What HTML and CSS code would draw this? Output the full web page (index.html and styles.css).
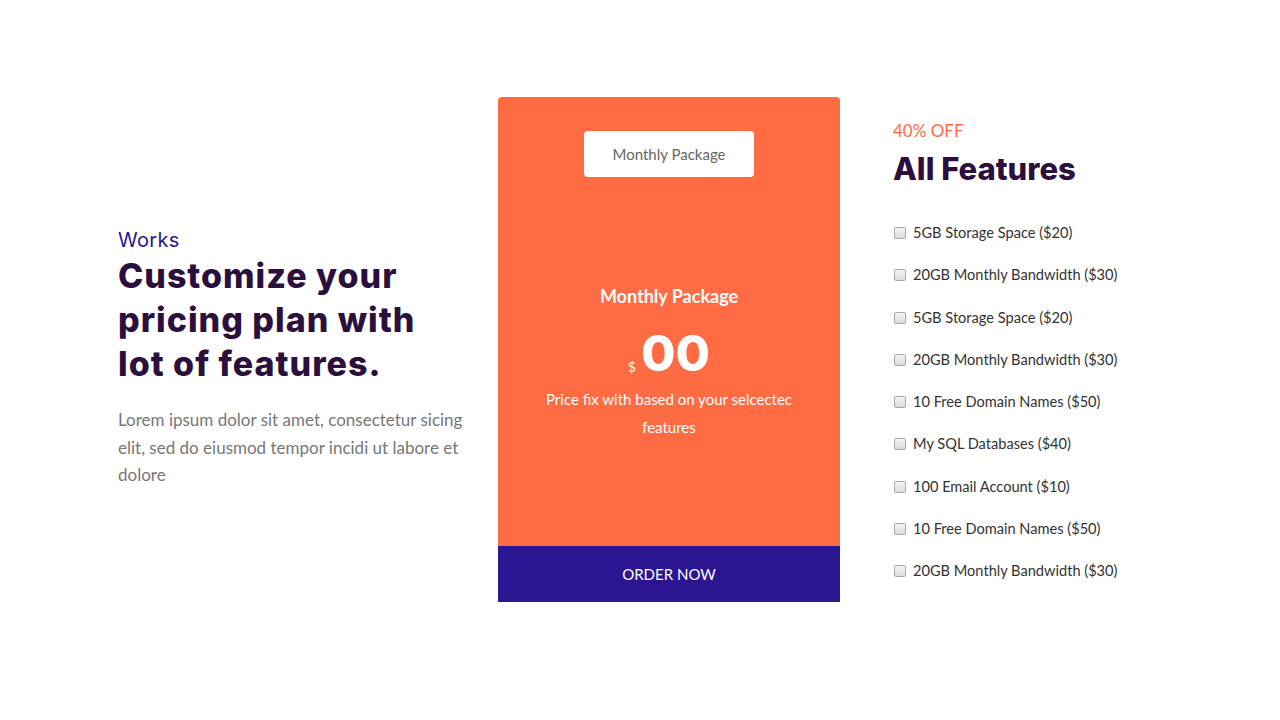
FILE: index.html
```html
<!DOCTYPE html>
<html lang="en">
<head>
<meta charset="utf-8">
<title>Pricing</title>
<link rel="stylesheet" href="styles.css">
</head>
<body>
<section class="pricing">
  <div class="intro">
    <div class="eyebrow">Works</div>
    <h1 class="title">Customize your<br>pricing plan with<br>lot of features.</h1>
    <p class="lead">Lorem ipsum dolor sit amet, consectetur sicing<br>elit, sed do eiusmod tempor incidi ut labore et<br>dolore</p>
  </div>
  <div class="card">
    <div class="card-body">
      <div class="tag">Monthly Package</div>
      <div class="plan">
        <div class="plan-name">Monthly Package</div>
        <div class="price"><span class="currency">$</span><span class="amount">00</span></div>
        <p class="plan-note">Price fix with based on your selcectec<br>features</p>
      </div>
    </div>
    <a class="order" href="#">ORDER NOW</a>
  </div>
  <div class="features">
    <div class="off">40% OFF</div>
    <h2 class="features-title">All Features</h2>
    <ul class="feature-list">
      <li><label><input type="checkbox" class="check"> 5GB Storage Space ($20)</label></li>
      <li><label><input type="checkbox" class="check"> 20GB Monthly Bandwidth ($30)</label></li>
      <li><label><input type="checkbox" class="check"> 5GB Storage Space ($20)</label></li>
      <li><label><input type="checkbox" class="check"> 20GB Monthly Bandwidth ($30)</label></li>
      <li><label><input type="checkbox" class="check"> 10 Free Domain Names ($50)</label></li>
      <li><label><input type="checkbox" class="check"> My SQL Databases ($40)</label></li>
      <li><label><input type="checkbox" class="check"> 100 Email Account ($10)</label></li>
      <li><label><input type="checkbox" class="check"> 10 Free Domain Names ($50)</label></li>
      <li><label><input type="checkbox" class="check"> 20GB Monthly Bandwidth ($30)</label></li>
    </ul>
  </div>
</section>
</body>
</html>
```

FILE: styles.css
```css
* { box-sizing: border-box; }
html, body { margin: 0; padding: 0; background: #fff; }
body {
  font-family: Lato, "Open Sans", sans-serif;
  color: #333;
  width: 1280px;
  height: 720px;
  overflow: hidden;
}
.pricing {
  display: flex;
  align-items: center;
  padding: 97px 0 0 118px;
}
.intro {
  width: 380px;
  padding-right: 20px;
  margin-top: 18px;
}
.eyebrow {
  font-family: Inter, "DejaVu Sans", sans-serif;
  font-size: 20px;
  color: #2a1592;
  line-height: 24px;
  letter-spacing: 0.3px;
}
.title {
  font-family: Inter, "DejaVu Sans", sans-serif;
  font-weight: 800;
  font-size: 34px;
  line-height: 44px;
  color: #2b0f3d;
  margin: 2px 0 20px;
  letter-spacing: 1px;
}
.lead {
  font-size: 17px;
  line-height: 27.5px;
  color: #777;
  margin: 0;
}
.card {
  width: 342px;
  height: 505px;
  background: #ff6b42;
  border-radius: 4px 4px 0 0;
  display: flex;
  flex-direction: column;
}
.card-body {
  flex: 1;
  display: flex;
  flex-direction: column;
  align-items: center;
  padding-top: 34px;
}
.tag {
  width: 170px;
  height: 46px;
  background: #fff;
  border-radius: 4px;
  color: #666;
  font-size: 15px;
  display: flex;
  align-items: center;
  justify-content: center;
}
.plan {
  margin-top: 106px;
  text-align: center;
  color: #fff;
}
.plan-name {
  font-weight: 700;
  font-size: 18px;
  line-height: 26px;
}
.price {
  display: flex;
  align-items: flex-end;
  justify-content: center;
  margin-top: 17px;
  height: 54px;
}
.currency {
  font-size: 14px;
  line-height: 14px;
  margin-right: 5px;
  padding-bottom: 6px;
}
.amount {
  font-family: Inter, "DejaVu Sans", sans-serif;
  font-weight: 800;
  font-size: 50px;
  line-height: 54px;
}
.plan-note {
  margin: 5px 0 0;
  font-size: 15px;
  line-height: 28px;
}
.order {
  height: 56px;
  background: #2b1591;
  color: #fff;
  text-decoration: none;
  font-size: 15px;
  display: flex;
  align-items: center;
  justify-content: center;
}
.features {
  align-self: flex-start;
  margin-left: 53px;
  padding-top: 23px;
}
.off {
  color: #ff6b42;
  font-size: 17px;
  line-height: 22px;
}
.features-title {
  font-family: Inter, "DejaVu Sans", sans-serif;
  font-weight: 800;
  font-size: 31px;
  line-height: 38px;
  color: #2b0f3d;
  margin: 8px 0 0;
}
.feature-list {
  list-style: none;
  margin: 34px 0 0;
  padding: 0;
}
.feature-list li {
  height: 42.25px;
  font-size: 14.6px;
  color: #333;
  line-height: 22px;
}
.feature-list label {
  display: flex;
  align-items: center;
}
.check {
  appearance: none;
  -webkit-appearance: none;
  width: 12px;
  height: 12px;
  margin: 0 7px 0 1px;
  border: 1px solid #a8a8a8;
  border-radius: 2px;
  background: linear-gradient(#f4f4f4, #dcdcdc);
}
```
